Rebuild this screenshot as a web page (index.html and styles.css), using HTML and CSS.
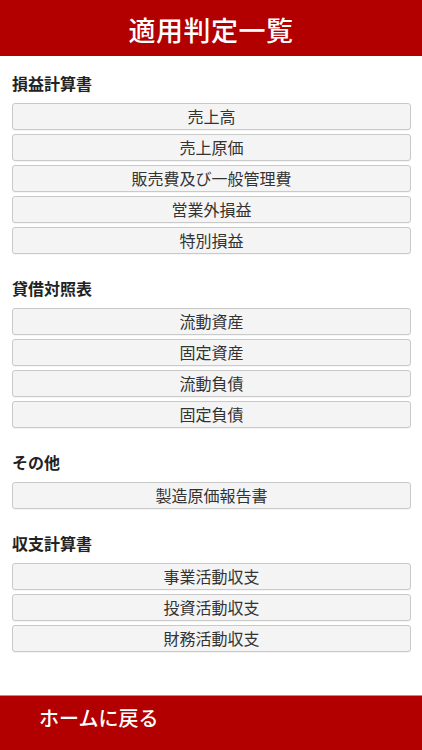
FILE: index.html
```html
<!DOCTYPE html>
<html lang="ja">
<head>
<meta charset="utf-8">
<title>適用判定一覧</title>
<link rel="stylesheet" href="styles.css">
</head>
<body>
<div class="page">
  <header class="header"><h1 class="title">適用判定一覧</h1></header>
  <main class="main">
    <section class="section">
      <h2 class="heading">損益計算書</h2>
      <div class="list">
        <button class="btn">売上高</button>
        <button class="btn">売上原価</button>
        <button class="btn">販売費及び一般管理費</button>
        <button class="btn">営業外損益</button>
        <button class="btn">特別損益</button>
      </div>
    </section>
    <section class="section">
      <h2 class="heading">貸借対照表</h2>
      <div class="list">
        <button class="btn">流動資産</button>
        <button class="btn">固定資産</button>
        <button class="btn">流動負債</button>
        <button class="btn">固定負債</button>
      </div>
    </section>
    <section class="section">
      <h2 class="heading">その他</h2>
      <div class="list">
        <button class="btn">製造原価報告書</button>
      </div>
    </section>
    <section class="section">
      <h2 class="heading">収支計算書</h2>
      <div class="list">
        <button class="btn">事業活動収支</button>
        <button class="btn">投資活動収支</button>
        <button class="btn">財務活動収支</button>
      </div>
    </section>
  </main>
  <footer class="footer"><a class="home" href="#">ホームに戻る</a></footer>
</div>
</body>
</html>
```
FILE: styles.css
```css
* { box-sizing: border-box; }
html, body { margin: 0; padding: 0; }
body {
  font-family: "Noto Sans CJK JP", "Noto Sans", sans-serif;
  background: #fff;
  color: #222;
}
.page {
  width: 422px;
  height: 750px;
  display: flex;
  flex-direction: column;
  overflow: hidden;
}
.header {
  height: 56px;
  background: #b20000;
  display: flex;
  align-items: center;
  justify-content: center;
  flex-shrink: 0;
}
.title {
  margin: 0;
  padding-top: 3px;
  font-size: 27px;
  font-weight: 500;
  color: #fff;
  letter-spacing: 0.5px;
  line-height: 1;
}
.main {
  flex: 1;
  padding: 17px 11px 0 12px;
}
.section + .section { margin-top: 24px; }
.heading {
  margin: 0 0 10px 0;
  font-size: 16px;
  font-weight: 700;
  line-height: 20px;
  color: #222;
}
.list {
  display: flex;
  flex-direction: column;
  gap: 4px;
}
.btn {
  display: block;
  width: 100%;
  height: 27px;
  margin: 0;
  padding: 0;
  background: #f4f4f4;
  border: 1px solid #c9c9c9;
  border-radius: 3px;
  font-family: "Noto Sans CJK JP", "Noto Sans", sans-serif;
  font-size: 16px;
  line-height: 25px;
  color: #333;
  text-align: center;
  box-shadow: 0 1px 0 rgba(0,0,0,0.04);
}
.footer {
  height: 55px;
  flex-shrink: 0;
  background: #b20000;
  border-top: 1px solid #d98080;
  padding: 8px 0 0 39px;
}
.home {
  font-size: 20px;
  line-height: 28px;
  color: #fff;
  text-decoration: none;
  font-weight: 500;
}
```
